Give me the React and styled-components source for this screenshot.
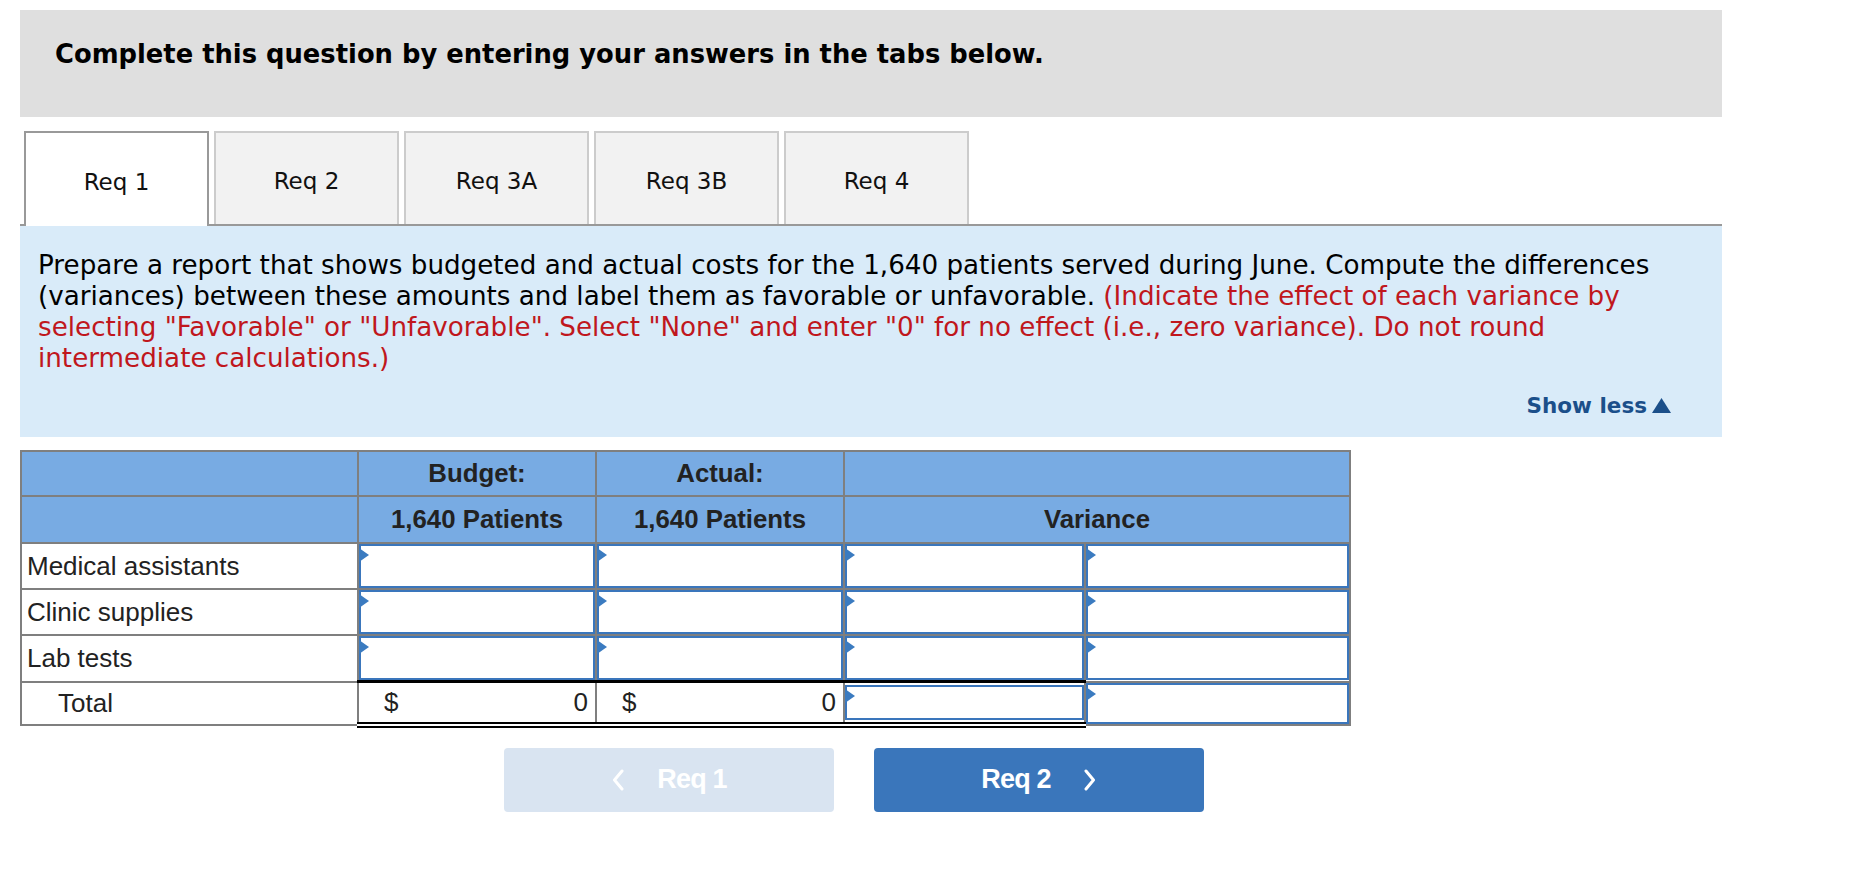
import React from "react";
import styled, { createGlobalStyle } from "styled-components";

const GlobalStyle = createGlobalStyle`
  html, body {
    margin: 0;
    padding: 0;
    background: #fff;
  }
  body {
    font-family: "DejaVu Sans", Verdana, sans-serif;
  }
`;

const Page = styled.div`
  width: 1702px;
  padding: 10px 0 0 20px;
`;

const Banner = styled.div`
  height: 107px;
  box-sizing: border-box;
  padding: 29px 35px 0;
  background: #dfdfdf;
  font-weight: bold;
  font-size: 25.8px;
  line-height: 30px;
  color: #000;
`;

const TabBar = styled.div`
  display: flex;
  gap: 5px;
  margin-top: 14px;
  padding-left: 4px;
  height: 95px;
  box-sizing: border-box;
  border-bottom: 2px solid #999;
`;

const Tab = styled.div`
  width: 185px;
  box-sizing: border-box;
  display: flex;
  align-items: center;
  justify-content: center;
  padding-top: 4px;
  font-size: 23px;
  color: #111;
  border: 2px solid ${({ $active }) => ($active ? "#999" : "#ccc")};
  border-bottom: none;
  background: ${({ $active }) => ($active ? "#fff" : "#f2f2f2")};
  margin-bottom: ${({ $active }) => ($active ? "-2px" : "0")};
  cursor: pointer;
`;

const Info = styled.div`
  height: 211px;
  box-sizing: border-box;
  background: #d9ebf9;
  padding: 24px 20px 0 18px;
  display: flex;
  flex-direction: column;
`;

const Prompt = styled.p`
  margin: 0;
  font-size: 26.2px;
  line-height: 31px;
  color: #000;
`;

const Red = styled.span`
  color: #c0171d;
`;

const ShowLess = styled.div`
  margin-top: auto;
  align-self: flex-end;
  margin-right: 31px;
  margin-bottom: 19px;
  display: flex;
  align-items: center;
  gap: 5px;
  font-weight: bold;
  font-size: 21.5px;
  line-height: 25px;
  color: #1b4f8a;
  cursor: pointer;
`;

const Grid = styled.table`
  margin-top: 13px;
  border-collapse: collapse;
  table-layout: fixed;
  width: 1331px;
  font-family: "Liberation Sans", Arial, sans-serif;
  color: #222;
`;

const Th = styled.th`
  padding: 0;
  border: 2px solid #7f7f7f;
  background: #78abe3;
  font-weight: bold;
  font-size: 25.8px;
  text-align: center;
`;

const HeadText = styled.div`
  height: ${({ $h }) => $h}px;
  display: flex;
  align-items: center;
  justify-content: center;
`;

const Label = styled.td`
  padding: 0 0 0 ${({ $indent }) => ($indent ? 36 : 5)}px;
  border: 2px solid #7f7f7f;
  font-size: 26px;
  white-space: nowrap;
`;

const Cell = styled.td`
  padding: 0;
  border: 2px solid #7f7f7f;
  ${({ $sumTop }) => $sumTop && "border-top: 3px solid #000;"}
  ${({ $sumBottom }) => $sumBottom && "border-bottom: 6px double #000;"}
`;

const Field = styled.div`
  position: relative;
  height: ${({ $h }) => $h || 44}px;
  box-sizing: border-box;
  border: 2px solid #3a76bc;
  background: #fff;
`;

const Input = styled.input`
  width: 100%;
  height: 100%;
  box-sizing: border-box;
  border: none;
  outline: none;
  background: transparent;
  padding: 0 8px;
  font-family: inherit;
  font-size: 26px;
  text-align: right;
`;

const Flag = styled.span`
  position: absolute;
  top: 2px;
  left: -2px;
  width: 0;
  height: 0;
  border-top: 7px solid transparent;
  border-bottom: 7px solid transparent;
  border-left: 10px solid #3b7bc0;
`;

const Amount = styled.div`
  height: 35px;
  display: flex;
  align-items: center;
  justify-content: space-between;
  padding: 0 7px 0 25px;
  font-size: 26px;
`;

const Nav = styled.div`
  display: flex;
  gap: 40px;
  margin-top: 20px;
  padding-left: 484px;
`;

const NavButton = styled.button`
  width: 330px;
  height: 64px;
  border: none;
  border-radius: 4px;
  background: ${({ $off }) => ($off ? "#d9e4f1" : "#3a76bb")};
  color: #fff;
  font-family: "Liberation Sans", Arial, sans-serif;
  font-weight: bold;
  font-size: 27px;
  letter-spacing: -0.8px;
  display: flex;
  align-items: center;
  justify-content: center;
  gap: 32px;
  cursor: ${({ $off }) => ($off ? "default" : "pointer")};
`;

const Chevron = ({ dir }) => (
  <svg width="14" height="22" viewBox="0 0 14 22">
    <path
      d={dir === "left" ? "M11 2 L3.5 11 L11 20" : "M3 2 L10.5 11 L3 20"}
      fill="none"
      stroke="#fff"
      strokeWidth="3"
      strokeLinecap="round"
      strokeLinejoin="round"
    />
  </svg>
);

const UpTriangle = () => (
  <svg width="19" height="15" viewBox="0 0 19 15">
    <polygon points="9.5,0 19,15 0,15" fill="#1b4f8a" />
  </svg>
);

const tabs = ["Req 1", "Req 2", "Req 3A", "Req 3B", "Req 4"];
const rows = ["Medical assistants", "Clinic supplies", "Lab tests"];

const InputCell = ({ h, ...rest }) => (
  <Cell {...rest}>
    <Field $h={h}>
      <Flag />
      <Input type="text" />
    </Field>
  </Cell>
);

const App = () => {
  return (
    <>
      <GlobalStyle />
      <Page>
        <Banner>Complete this question by entering your answers in the tabs below.</Banner>

        <TabBar>
          {tabs.map((t, i) => (
            <Tab key={t} $active={i === 0}>
              {t}
            </Tab>
          ))}
        </TabBar>

        <Info>
          <Prompt>
            Prepare a report that shows budgeted and actual costs for the 1,640 patients served
            during June. Compute the differences (variances) between these amounts and label them
            as favorable or unfavorable.{" "}
            <Red>
              (Indicate the effect of each variance by selecting "Favorable" or "Unfavorable".
              Select "None" and enter "0" for no effect (i.e., zero variance). Do not round
              intermediate calculations.)
            </Red>
          </Prompt>
          <ShowLess>
            Show less
            <UpTriangle />
          </ShowLess>
        </Info>

        <Grid>
          <colgroup>
            <col style={{ width: 337 }} />
            <col style={{ width: 238 }} />
            <col style={{ width: 248 }} />
            <col style={{ width: 241 }} />
            <col style={{ width: 265 }} />
          </colgroup>
          <thead>
            <tr>
              <Th>
                <HeadText $h={43} />
              </Th>
              <Th>
                <HeadText $h={43}>Budget:</HeadText>
              </Th>
              <Th>
                <HeadText $h={43}>Actual:</HeadText>
              </Th>
              <Th colSpan={2}>
                <HeadText $h={43} />
              </Th>
            </tr>
            <tr>
              <Th>
                <HeadText $h={45} />
              </Th>
              <Th>
                <HeadText $h={45}>1,640 Patients</HeadText>
              </Th>
              <Th>
                <HeadText $h={45}>1,640 Patients</HeadText>
              </Th>
              <Th colSpan={2}>
                <HeadText $h={45}>Variance</HeadText>
              </Th>
            </tr>
          </thead>
          <tbody>
            {rows.map((r) => (
              <tr key={r}>
                <Label>{r}</Label>
                <InputCell />
                <InputCell />
                <InputCell />
                <InputCell />
              </tr>
            ))}
            <tr>
              <Label $indent>Total</Label>
              <Cell $sumTop $sumBottom>
                <Amount>
                  <span>$</span>
                  <span>0</span>
                </Amount>
              </Cell>
              <Cell $sumTop $sumBottom>
                <Amount>
                  <span>$</span>
                  <span>0</span>
                </Amount>
              </Cell>
              <InputCell $sumTop $sumBottom h={35} />
              <InputCell h={41} />
            </tr>
          </tbody>
        </Grid>

        <Nav>
          <NavButton $off>
            <Chevron dir="left" />
            Req 1
          </NavButton>
          <NavButton>
            Req 2
            <Chevron dir="right" />
          </NavButton>
        </Nav>
      </Page>
    </>
  );
};

export default App;
